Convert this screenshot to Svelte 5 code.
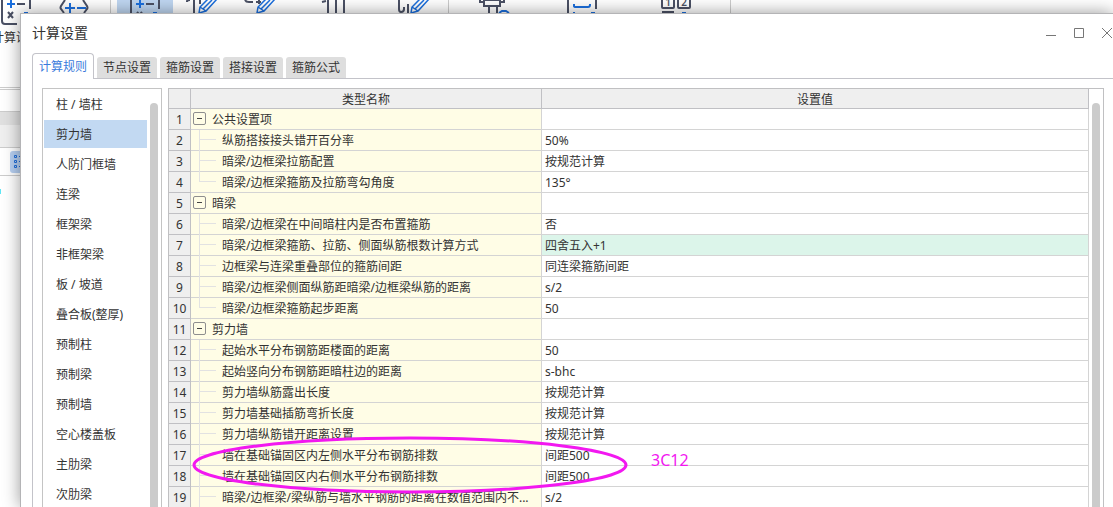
<script>
  const tabs = ['计算规则', '节点设置', '箍筋设置', '搭接设置', '箍筋公式'];
  const members = [
    '柱 / 墙柱', '剪力墙', '人防门框墙', '连梁', '框架梁', '非框架梁', '板 / 坡道',
    '叠合板(整厚)', '预制柱', '预制梁', '预制墙', '空心楼盖板', '主肋梁', '次肋梁'
  ];
  const rows = [
    { group: true, name: '公共设置项', value: '' },
    { name: '纵筋搭接接头错开百分率', value: '50%' },
    { name: '暗梁/边框梁拉筋配置', value: '按规范计算' },
    { name: '暗梁/边框梁箍筋及拉筋弯勾角度', value: '135°', last: true },
    { group: true, name: '暗梁', value: '' },
    { name: '暗梁/边框梁在中间暗柱内是否布置箍筋', value: '否' },
    { name: '暗梁/边框梁箍筋、拉筋、侧面纵筋根数计算方式', value: '四舍五入+1', marked: true },
    { name: '边框梁与连梁重叠部位的箍筋间距', value: '同连梁箍筋间距' },
    { name: '暗梁/边框梁侧面纵筋距暗梁/边框梁纵筋的距离', value: 's/2' },
    { name: '暗梁/边框梁箍筋起步距离', value: '50', last: true },
    { group: true, name: '剪力墙', value: '' },
    { name: '起始水平分布钢筋距楼面的距离', value: '50' },
    { name: '起始竖向分布钢筋距暗柱边的距离', value: 's-bhc' },
    { name: '剪力墙纵筋露出长度', value: '按规范计算' },
    { name: '剪力墙基础插筋弯折长度', value: '按规范计算' },
    { name: '剪力墙纵筋错开距离设置', value: '按规范计算' },
    { name: '墙在基础锚固区内左侧水平分布钢筋排数', value: '间距500' },
    { name: '墙在基础锚固区内右侧水平分布钢筋排数', value: '间距500' },
    { name: '暗梁/边框梁/梁纵筋与墙水平钢筋的距离在数值范围内不...', value: 's/2' }
  ];
  let activeTab = $state(0);
  let activeMember = $state(1);

  // Ribbon entries: dark strokes, blue strokes, pencil position, optional label; a separator has only a width.
  const calc = {
    dark: 'M-14 0V21Q-14 24 -11 24H1M14 0V9M1 4H9M-8 12L-3 18M-3 12L-8 18',
    blue: 'M-9 4H-1M-5 0V8M8 13H12'
  };
  const ribbon = [
    { width: 56, label: '计算设置', ...calc },
    { width: 60, dark: 'M-9 0L-13 6Q-14 8 -13 9L-10 13M9 0L13 6Q14 8 13 9L10 13', blue: 'M-9 8H1M-4 3V13M3 8H12' },
    { width: 13, sep: true },
    { width: 56, selected: true, ...calc },
    { width: 58, dark: 'M-15 2V1Q-14 0 -12 0M-8 0V13M-2 0V4', blue: '', pencil: -3 },
    { width: 58, dark: 'M-15 0Q-14 2 -11 2H-7M-1 0V4M-4 2H1', blue: '', pencil: -3 },
    { width: 90, dark: 'M-12 2L-8 1M-6 0V13M2 0V13M10 0V13', blue: '' },
    { width: 66, dark: 'M-13 0V9Q-13 12 -11 12Q-8 12 -8 9V7M-4 4V13', blue: '', pencil: -1 },
    { width: 7, sep: true },
    { width: 80, dark: 'M-12 0V2H-8M12 0V2H8M-8 0V6H8V0H-8M-3 6V13M5 6V13', blue: 'M7 13L10 11H14L17 13' },
    { width: 100, dark: 'M-14 0V13M14 0V9', blue: 'M-8 4V6Q-8 7 -6 7H6Q8 7 8 5V4M-8 12V13M9 13H13' },
    { width: 88, dark: 'M-14 0V7Q-14 8 -13 8H-3Q-2 8 -2 7V0M2 0V7Q2 8 3 8H13Q14 8 14 7V0M-14 12H-2', blue: 'M6 13H10', digits: true },
    { width: 21, sep: true }
  ];
</script>

<div class="app">
  <nav class="ribbon" aria-label="工具栏">
    {#each ribbon as item}
      {#if item.sep}
        <span class="sep" style="width: {item.width}px"></span>
      {:else}
        <button class="tool" class:selected={item.selected} style="width: {item.width}px">
          <svg width="48" height="28" viewBox="-24 0 48 28" fill="none" stroke-width="2" aria-hidden="true">
            <path class="dark" d={item.dark} />
            <path class="blue" d={item.blue} />
            {#if item.pencil}
              <path class="blue pencil" transform="translate({item.pencil} 0)" d="M9 -1L1 7L0 13L7 11L18 -1M1 7L7 11M4 9L13 0" />
            {/if}
            {#if item.digits}
              <text x="-8" y="6">1</text>
              <text x="8" y="6">2</text>
            {/if}
          </svg>
          {#if item.label}<span>{item.label}</span>{/if}
        </button>
      {/if}
    {/each}
  </nav>
  <div class="strip white"></div>
  <div class="strip dark-strip"></div>
  <div class="strip light-strip"></div>
  <div class="strip tools">
    <button class="grip" aria-label="列表">
      <svg width="10" height="22" viewBox="0 0 10 22" fill="none" stroke="#1f6fdc" aria-hidden="true">
        <path d="M4.500 4.500h2v2h-2zM4.500 9.500h2v2h-2zM4.500 14.500h2v2h-2zM9 5.500h1M9 10.500h1M9 15.500h1" />
      </svg>
    </button>
  </div>
  <div class="canvas"><span class="speck"></span></div>

  <section class="dialog" aria-label="计算设置">
    <header>
      <h1>计算设置</h1>
      <div class="window-buttons">
        <button aria-label="最小化"><svg width="12" height="12" viewBox="0 0 12 12"><path d="M1 8.500H11" /></svg></button>
        <button aria-label="最大化"><svg width="12" height="12" viewBox="0 0 12 12"><path d="M1.500 1.500H10.500V10.500H1.500Z" /></svg></button>
        <button aria-label="关闭"><svg width="12" height="12" viewBox="0 0 12 12"><path d="M1 1L11 11M11 1L1 11" /></svg></button>
      </div>
    </header>

    <div class="tabs" role="tablist">
      {#each tabs as tab, i}
        <button role="tab" aria-selected={i === activeTab} class:active={i === activeTab} onclick={() => (activeTab = i)}>{tab}</button>
      {/each}
    </div>

    <div class="panel">
      <aside>
        <ul>
          {#each members as member, i}
            <li><button class:active={i === activeMember} onclick={() => (activeMember = i)}>{member}</button></li>
          {/each}
        </ul>
        <div class="thumb"></div>
      </aside>

      <div class="grid">
        <table>
          <colgroup><col class="c-num" /><col class="c-name" /><col /></colgroup>
          <thead>
            <tr><th></th><th>类型名称</th><th>设置值</th></tr>
          </thead>
          <tbody>
            {#each rows as row, i}
              <tr>
                <th scope="row">{i + 1}</th>
                <td class="name">
                  <div class="cell" class:group={row.group} class:last={row.last}>
                    {#if row.group}
                      <button class="toggle" aria-label="折叠"></button>
                    {:else}
                      <span class="branch"></span>
                    {/if}
                    <span class="label">{row.name}</span>
                  </div>
                </td>
                <td class="value" class:marked={row.marked}>{row.value}</td>
              </tr>
            {/each}
          </tbody>
        </table>
        <div class="thumb"></div>
        <div class="note">
          <svg width="436" height="60" viewBox="0 0 436 60" aria-hidden="true">
            <ellipse cx="218" cy="30" rx="216" ry="27" />
          </svg>
          <span>3C12</span>
        </div>
      </div>
    </div>
  </section>
</div>

<style>
  :global(body) { margin: 0; }
  .app {
    position: relative;
    height: 100vh;
    overflow: hidden;
    display: flex;
    flex-direction: column;
    background: #fff;
    color: #333;
    font: 12px/20px "Noto Sans", "Noto Sans CJK SC", sans-serif;
  }
  button {
    margin: 0;
    padding: 0;
    border: 0;
    background: none;
    color: inherit;
    font: inherit;
  }
  .ribbon {
    flex: none;
    display: flex;
    height: 87px;
    margin-left: -12px;
    border-bottom: 1px solid #ccc;
  }
  .tool {
    flex: none;
    display: flex;
    flex-direction: column;
    align-items: center;
    white-space: nowrap;
  }
  .tool.selected { background: #bfd6f1; }
  .tool svg { flex: none; }
  .dark { stroke: #4b5165; }
  .blue { stroke: #1b6fde; }
  .pencil { stroke-width: 1.5; }
  .tool text {
    fill: #4b5165;
    font-size: 10px;
    font-weight: 600;
    text-anchor: middle;
  }
  .sep {
    flex: none;
    display: flex;
    justify-content: center;
  }
  .sep::before {
    content: "";
    width: 1px;
    background: #ccc;
  }
  .strip { flex: none; }
  .white {
    height: 21px;
    margin-top: 1px;
    border: solid #ccc;
    border-width: 1px 0;
  }
  .dark-strip { height: 13px; background: #e0e0e0; }
  .light-strip { height: 22px; background: #efefef; }
  .tools {
    height: 27px;
    padding: 0 10px;
    border: solid #ccc;
    border-width: 1px 0;
  }
  .grip {
    display: flex;
    width: 40px;
    height: 22px;
    margin-top: 3px;
    border-radius: 3px;
    background: #b7d0f2;
  }
  .canvas { padding-top: 13px; }
  .speck {
    display: block;
    width: 1px;
    height: 5px;
    background: #5fe6f5;
  }

  .dialog {
    position: absolute;
    inset: 13px 0 0 20px;
    overflow: hidden;
    display: flex;
    flex-direction: column;
    border: solid #b4b4b6;
    border-width: 1px 0 0 1px;
    background: #fff;
    box-shadow: 0 0 16px rgba(0, 0, 0, 0.4);
  }
  header {
    flex: none;
    display: flex;
    align-items: center;
    justify-content: space-between;
    box-sizing: border-box;
    height: 39px;
    padding: 0 0 2px 11px;
  }
  h1 {
    margin: 0;
    font-size: 14px;
    font-weight: 400;
  }
  .window-buttons {
    display: flex;
    gap: 16px;
  }
  .window-buttons button { display: flex; }
  .window-buttons path {
    fill: none;
    stroke: #777;
  }
  .tabs {
    flex: none;
    display: flex;
    align-items: flex-end;
    gap: 3px;
    margin-left: 11px;
  }
  .tabs button {
    width: 60px;
    height: 21px;
    border-radius: 3px 3px 0 0;
    background: #dedede;
  }
  .tabs .active {
    z-index: 1;
    width: 62px;
    height: 26px;
    margin-bottom: -1px;
    border: 1px solid #c3c3c9;
    border-bottom: 0;
    border-radius: 4px 4px 0 0;
    background: #fff;
    color: #3a7bdc;
  }
  .panel {
    flex: 1;
    display: flex;
    align-items: flex-start;
    gap: 6px;
    margin-left: 11px;
    padding: 9px;
    border: solid #c3c3c9;
    border-width: 1px 0 0 1px;
  }
  aside {
    flex: none;
    display: flex;
    box-sizing: border-box;
    width: 120px;
    border: 1px solid #c4c4c4;
  }
  ul {
    flex: 1;
    display: flex;
    flex-direction: column;
    gap: 2px;
    margin: 0;
    padding: 1px 0 1px 1px;
    list-style: none;
  }
  li button {
    display: block;
    width: 100%;
    height: 28px;
    padding: 2px 0 0 12px;
    text-align: left;
    white-space: nowrap;
  }
  li .active { background: #c2d9f2; }
  .thumb {
    flex: none;
    width: 8px;
    margin: 14px 3px 0;
    border-radius: 4px 4px 0 0;
    background: #cbcbcb;
  }

  .grid {
    position: relative;
    flex: 1;
    display: flex;
    border: 1px solid #c0c0c2;
  }
  table {
    flex: 1;
    width: 100%;
    table-layout: fixed;
    border-collapse: separate;
    border-spacing: 0;
  }
  .c-num { width: 22px; }
  .c-name { width: 351px; }
  th, td {
    height: 18px;
    padding: 2px 0 0;
    border: solid #d4d4d4;
    border-width: 0 1px 1px 0;
    font-weight: 400;
    line-height: 18px;
    white-space: nowrap;
  }
  th {
    border-color: #c0c0c4;
    background: #efefef;
  }
  thead th { height: 17px; line-height: 17px; }
  td.name {
    height: 20px;
    padding: 0;
    background: #fffde6;
  }
  td.value { padding-left: 3px; }
  .marked { background: #dcf5ea; }
  .cell {
    display: flex;
    height: 20px;
    padding-left: 8px;
  }
  .cell.group {
    gap: 6px;
    padding-left: 2px;
  }
  .label { padding-top: 2px; }
  .branch {
    width: 22px;
    height: 21px;
    border-left: 1px solid #e2e2e2;
    background: linear-gradient(#e2e2e2, #e2e2e2) 0 9px / 16px 1px no-repeat;
  }
  .last .branch { height: 10px; }
  .toggle {
    display: flex;
    align-items: center;
    justify-content: center;
    width: 13px;
    height: 13px;
    margin-top: 3px;
    border: 1px solid #8e8e8e;
    border-radius: 2px;
  }
  .toggle::before {
    content: "";
    width: 5px;
    height: 1px;
    background: #444;
  }
  .note {
    position: absolute;
    top: 346px;
    left: 23px;
    display: flex;
    align-items: center;
    gap: 23px;
    color: #f218f0;
    font-size: 16px;
    pointer-events: none;
  }
  .note span { padding-bottom: 10px; }
  ellipse {
    fill: none;
    stroke: #f218f0;
    stroke-width: 3;
  }
</style>
